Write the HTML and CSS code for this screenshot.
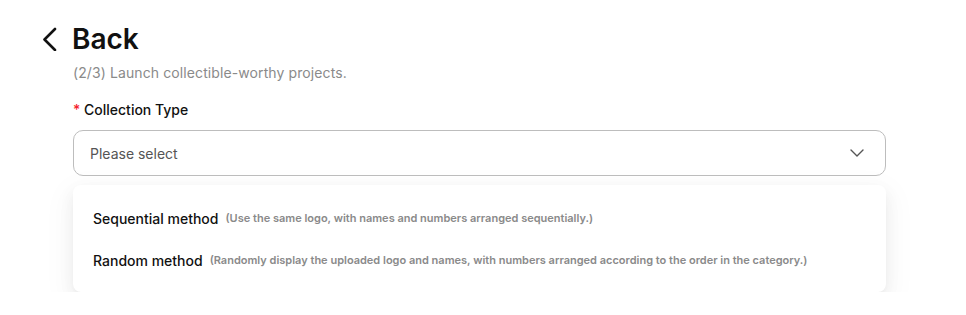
FILE: index.html
```html
<!DOCTYPE html>
<html lang="en">
<head>
    <meta charset="UTF-8">
    <meta name="viewport" content="width=device-width, initial-scale=1.0">
    <title>Create Collection</title>
    <link rel="stylesheet" href="styles.css">
</head>
<body>
    <div class="page">
        <div class="header">
            <svg class="back-icon" width="24" height="24" viewBox="0 0 24 24" fill="none">
                <path d="M15 2 L4.5 12.5 L15 23" stroke="#111" stroke-width="2.6" stroke-linecap="round" stroke-linejoin="round"/>
            </svg>
            <h1>Back</h1>
        </div>
        <div class="content">
            <p class="subtitle">(2/3) Launch collectible-worthy projects.</p>
            <div class="form-group">
                <label><span class="required">*</span> Collection Type</label>
                <div class="select">
                    <span class="placeholder">Please select</span>
                    <svg class="arrow" width="14" height="8" viewBox="0 0 14 8" fill="none">
                        <path d="M1 1 L7 7 L13 1" stroke="#555" stroke-width="1.4" stroke-linecap="round" stroke-linejoin="round"/>
                    </svg>
                </div>
                <div class="dropdown">
                    <div class="option">
                        <span class="option-name">Sequential method</span>
                        <span class="option-note">(Use the same logo, with names and numbers arranged sequentially.)</span>
                    </div>
                    <div class="option">
                        <span class="option-name">Random method</span>
                        <span class="option-note">(Randomly display the uploaded logo and names, with numbers arranged according to the order in the category.)</span>
                    </div>
                </div>
            </div>
        </div>
    </div>
</body>
</html>
```

FILE: styles.css
```css
body {
    font-family: Inter, "Noto Sans", sans-serif;
    margin: 0;
    padding: 0;
    background-color: #fff;
    color: #111;
}
.page {
    padding: 21px 80px 0 40px;
}
.header {
    display: flex;
    align-items: center;
    gap: 8px;
    height: 36px;
}
.back-icon {
    display: block;
}
.header h1 {
    margin: 0;
    font-size: 28px;
    font-weight: 600;
    line-height: 36px;
    color: #111;
}
.content {
    margin-left: 33px;
}
.subtitle {
    margin: 6px 0 0;
    font-size: 14px;
    line-height: 20px;
    letter-spacing: 0.1px;
    color: #8a8a8a;
}
.form-group {
    margin-top: 17px;
    display: flex;
    flex-direction: column;
}
.form-group label {
    font-size: 14px;
    font-weight: 500;
    line-height: 20px;
    color: #111;
}
.required {
    color: #f5222d;
}
.select {
    margin-top: 10px;
    height: 46px;
    box-sizing: border-box;
    border: 1px solid #bdbdbd;
    border-radius: 10px;
    display: flex;
    align-items: center;
    justify-content: space-between;
    padding: 0 21px 0 16px;
}
.placeholder {
    font-size: 14px;
    color: #555;
}
.dropdown {
    margin-top: 9px;
    padding: 12px 0 11px;
    background-color: #fff;
    border-radius: 8px;
    box-shadow: 0 6px 16px 0 rgba(0, 0, 0, 0.06), 0 3px 6px -4px rgba(0, 0, 0, 0.08), 0 9px 28px 8px rgba(0, 0, 0, 0.03);
}
.option {
    height: 42px;
    display: flex;
    align-items: center;
    padding-left: 20px;
    gap: 7px;
}
.option-name {
    font-size: 14px;
    font-weight: 500;
    color: #111;
}
.option-note {
    font-size: 11px;
    font-weight: 600;
    color: #8a8a8a;
}
```
